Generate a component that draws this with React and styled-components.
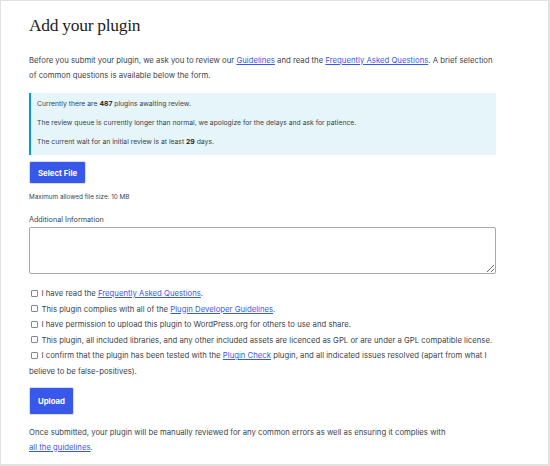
import styled, { createGlobalStyle } from "styled-components";

const Global = createGlobalStyle`
  html, body { margin: 0; padding: 0; background: #fff; }
  * { box-sizing: border-box; }
`;

const Page = styled.div`
  width: 550px;
  height: 466px;
  border: 1px solid #e2e2e2;
  border-right-width: 2px;
  border-bottom-width: 2px;
  padding: 12px 52px 0 28px;
  font-family: Inter, "Noto Sans", sans-serif;
  color: #3c434a;
  overflow: hidden;
`;

const Title = styled.h1`
  margin: 0;
  font-family: "Liberation Serif", serif;
  font-weight: 400;
  font-size: 17.5px;
  letter-spacing: -0.3px;
  line-height: 24px;
  color: #1e1e1e;
`;

const Text = styled.p`
  margin: ${(p) => p.$margin || "0"};
  font-size: ${(p) => p.$size || "7.75px"};
  line-height: ${(p) => p.$lh || "15px"};
`;

const Link = styled.a`
  color: #3858e9;
  text-decoration: underline;
  cursor: pointer;
  white-space: ${(p) => (p.$nowrap ? "nowrap" : "normal")};
`;

const Notice = styled.div`
  margin-top: 10.5px;
  background: #e5f5fa;
  border-left: 2px solid #00a0d2;
  padding: 6px 6px 8px;
  display: flex;
  flex-direction: column;
  gap: 9px;
`;

const NoticeLine = styled.p`
  margin: 0;
  font-size: 6.8px;
  line-height: 10px;
  b { color: #1e1e1e; font-weight: 700; }
`;

const ButtonRow = styled.div`
  margin-top: ${(p) => p.$mt || "6px"};
`;

const Button = styled.button`
  display: block;
  height: ${(p) => p.$h || "23px"};
  padding: 0 ${(p) => p.$px || "8px"};
  background: #3858e9;
  color: #fff;
  border: 1px solid #d6dcf7;
  border-radius: 2px;
  font-family: Inter, "Noto Sans", sans-serif;
  font-weight: 700;
  font-size: 7.8px;
  cursor: pointer;
`;

const Label = styled.div`
  margin-top: 13px;
  font-size: 7.2px;
  line-height: 10px;
`;

const Area = styled.textarea`
  display: block;
  width: 100%;
  height: 47px;
  margin-top: 2px;
  border: 1px solid #a7aaad;
  border-radius: 2px;
  resize: vertical;
`;

const Checks = styled.div`
  margin-top: 12px;
  display: flex;
  flex-direction: column;
`;

const CheckRow = styled.label`
  font-size: 7.75px;
  line-height: 15.5px;
`;

const Box = styled.input.attrs({ type: "checkbox" })`
  appearance: none;
  width: 7px;
  height: 7px;
  margin: 0 3.5px 0 2px;
  border: 1px solid #7e8993;
  border-radius: 1px;
  background: #fff;
  vertical-align: -0.5px;
`;

export default function App() {
  return (
    <Page>
      <Global />
      <Title>Add your plugin</Title>
      <Text $margin="15.5px 0 0">
        Before you submit your plugin, we ask you to review our <Link>Guidelines</Link> and read the{" "}
        <Link>Frequently Asked Questions</Link>. A brief selection of common questions is available below the form.
      </Text>
      <Notice>
        <NoticeLine>
          Currently there are <b>487</b> plugins awaiting review.
        </NoticeLine>
        <NoticeLine>
          The review queue is currently longer than normal, we apologize for the delays and ask for patience.
        </NoticeLine>
        <NoticeLine>
          The current wait for an initial review is at least <b>29</b> days.
        </NoticeLine>
      </Notice>
      <ButtonRow>
        <Button>Select File</Button>
      </ButtonRow>
      <Text $size="6.35px" $lh="10px" $margin="8px 0 0">
        Maximum allowed file size: 10 MB
      </Text>
      <Label>Additional Information</Label>
      <Area />
      <Checks>
        <CheckRow>
          <Box />I have read the <Link>Frequently Asked Questions</Link>.
        </CheckRow>
        <CheckRow>
          <Box />This plugin complies with all of the <Link>Plugin Developer Guidelines</Link>.
        </CheckRow>
        <CheckRow>
          <Box />I have permission to upload this plugin to WordPress.org for others to use and share.
        </CheckRow>
        <CheckRow>
          <Box />This plugin, all included libraries, and any other included assets are licenced as GPL or are under a GPL compatible license.
        </CheckRow>
        <CheckRow>
          <Box />I confirm that the plugin has been tested with the <Link>Plugin Check</Link> plugin, and all indicated issues resolved (apart from what I believe to be false-positives).
        </CheckRow>
      </Checks>
      <ButtonRow $mt="8px">
        <Button $h="28px">Upload</Button>
      </ButtonRow>
      <Text $margin="9.5px 0 0">
        Once submitted, your plugin will be manually reviewed for any common errors as well as ensuring it complies with{" "}
        <Link $nowrap>all the guidelines</Link>.
      </Text>
    </Page>
  );
}
